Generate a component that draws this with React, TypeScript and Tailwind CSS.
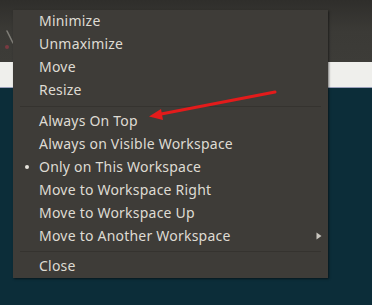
import React from "react";

type Item = { label: string; bullet?: boolean; sub?: boolean };

const group1: Item[] = [
  { label: "Minimize" },
  { label: "Unmaximize" },
  { label: "Move" },
  { label: "Resize" },
];
const group2: Item[] = [
  { label: "Always On Top" },
  { label: "Always on Visible Workspace" },
  { label: "Only on This Workspace", bullet: true },
  { label: "Move to Workspace Right" },
  { label: "Move to Workspace Up" },
  { label: "Move to Another Workspace", sub: true },
];

function Row({ item }: { item: Item }) {
  return (
    <div className="relative h-[23px] pl-[26px] pr-[8px] leading-[21px] text-[14px] tracking-[0.22px] text-[#dedbd3]">
      {item.bullet && (
        <span className="absolute left-[12px] top-[9px] h-[4px] w-[4px] rounded-full bg-[#e6e3dc]" />
      )}
      <span>{item.label}</span>
      {item.sub && (
        <svg className="absolute right-[6px] top-[7px]" width="6" height="8" viewBox="0 0 6 8">
          <path d="M0.5 0.5 L5.5 4 L0.5 7.5 Z" fill="#c9c6bf" />
        </svg>
      )}
    </div>
  );
}

export default function App() {
  return (
    <div
      className="relative h-[305px] w-[372px] overflow-hidden bg-[#0c2d39]"
      style={{ fontFamily: '"Noto Sans", "Open Sans", sans-serif' }}
    >
      <div className="h-[62px] bg-gradient-to-b from-[#2f2e2b] via-[#3b3a36] to-[#3d3c38]" />
      <div className="h-[26px] border-b border-[#9aa0bb] bg-[#efefec]" />

      {/* partially hidden window control */}
      <svg className="absolute left-[3px] top-[28px]" width="12" height="24" viewBox="0 0 12 24">
        <path d="M4 3 L10 15" stroke="#7f7d77" strokeWidth="1.6" strokeLinecap="round" />
        <circle cx="4" cy="19" r="2" fill="#7a3a42" />
      </svg>

      <div className="absolute left-[13px] top-[10px] h-[268px] w-[315px] bg-[#3e3c38] shadow-[1px_1px_2px_rgba(0,0,0,0.5)]">
        {group1.map((it) => (
          <Row key={it.label} item={it} />
        ))}
        <div className="flex h-[8px] items-center px-[7px]">
          <div className="h-px w-full bg-[#35332f]" />
        </div>
        {group2.map((it) => (
          <Row key={it.label} item={it} />
        ))}
        <div className="flex h-[7px] items-center px-[7px]">
          <div className="h-px w-full bg-[#35332f]" />
        </div>
        <Row item={{ label: "Close" }} />
      </div>

      {/* red annotation arrow */}
      <svg className="absolute left-0 top-0" width="372" height="305" viewBox="0 0 372 305">
        <line x1="275" y1="92" x2="156" y2="115" stroke="#e31b1b" strokeWidth="3" strokeLinecap="round" />
        <path d="M149 116.5 L161 109 L163 120 Z" fill="#e31b1b" />
      </svg>
    </div>
  );
}
